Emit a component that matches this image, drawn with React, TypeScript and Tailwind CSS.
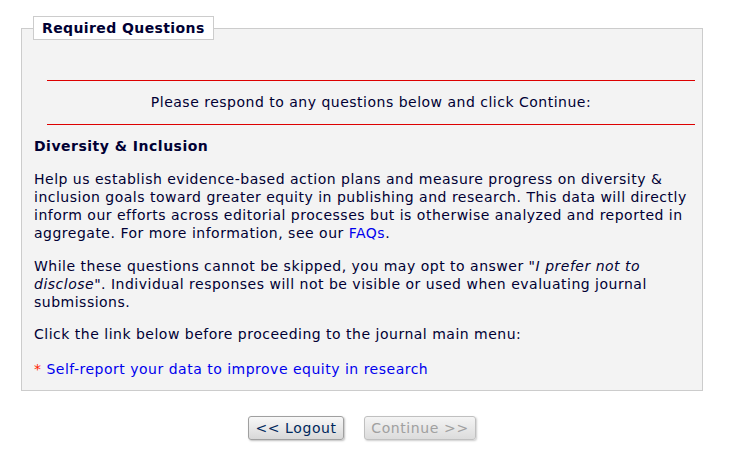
import React from "react";

export default function App() {
  const font = { fontFamily: '"DejaVu Sans", Verdana, sans-serif' };
  return (
    <div className="w-[729px] h-[456px] bg-white text-[#000033]" style={font}>
      <div className="pt-[16px] pl-[21px]">
        <fieldset className="w-[682px] border border-[#cccccc] bg-[#f3f3f3] pb-[12px]">
          <legend className="ml-[11px] h-[24px] border border-[#cccccc] bg-white px-[8px] text-[14px] font-bold leading-[22px] tracking-[0.4px] text-[#000033]">
            Required Questions
          </legend>
          <div className="ml-[25px] mr-[7px] mt-[40px] flex h-[45px] items-center justify-center border-y border-[#dd0000] text-[14px] tracking-[0.5px]">
            Please respond to any questions below and click Continue:
          </div>
          <div className="pl-[12px] pr-[4px] pt-[12px] text-[14px] leading-[18px] tracking-[0.5px]">
            <h2 className="text-[14px] font-bold leading-[18px]">Diversity &amp; Inclusion</h2>
            <p className="mt-[15px]">
              Help us establish evidence-based action plans and measure progress on diversity &amp; inclusion goals toward greater equity in publishing and research. This data will directly inform our efforts across editorial processes but is otherwise analyzed and reported in aggregate. For more information, see our{" "}
              <a className="text-[#0000ee]">FAQs</a>.
            </p>
            <p className="mt-[15px]">
              While these questions cannot be skipped, you may opt to answer <i>"I prefer not to disclose"</i>. Individual responses will not be visible or used when evaluating journal submissions.
            </p>
            <p className="mt-[14px]">Click the link below before proceeding to the journal main menu:</p>
            <p className="mt-[17px]">
              <span className="text-[#ff2200]">*</span>{" "}
              <a className="text-[#0000ee]">Self-report your data to improve equity in research</a>
            </p>
          </div>
        </fieldset>
        <div className="mt-[25px] flex w-[682px] justify-center gap-[20px]">
          <button className="h-[24px] w-[96px] rounded-[3px] border border-[#a0a0a0] bg-gradient-to-b from-[#f8f8f8] to-[#d8d8d8] text-[14px] leading-[22px] tracking-[0.6px] text-[#00285c] shadow-[1px_1px_2px_rgba(0,0,0,0.25)]" style={font}>
            &lt;&lt; Logout
          </button>
          <button className="h-[24px] w-[112px] rounded-[3px] border border-[#c0c0c0] bg-gradient-to-b from-[#f4f4f4] to-[#dcdcdc] text-[14px] leading-[22px] tracking-[0.6px] text-[#a0a0a0] shadow-[1px_1px_2px_rgba(0,0,0,0.2)]" style={font}>
            Continue &gt;&gt;
          </button>
        </div>
      </div>
    </div>
  );
}
